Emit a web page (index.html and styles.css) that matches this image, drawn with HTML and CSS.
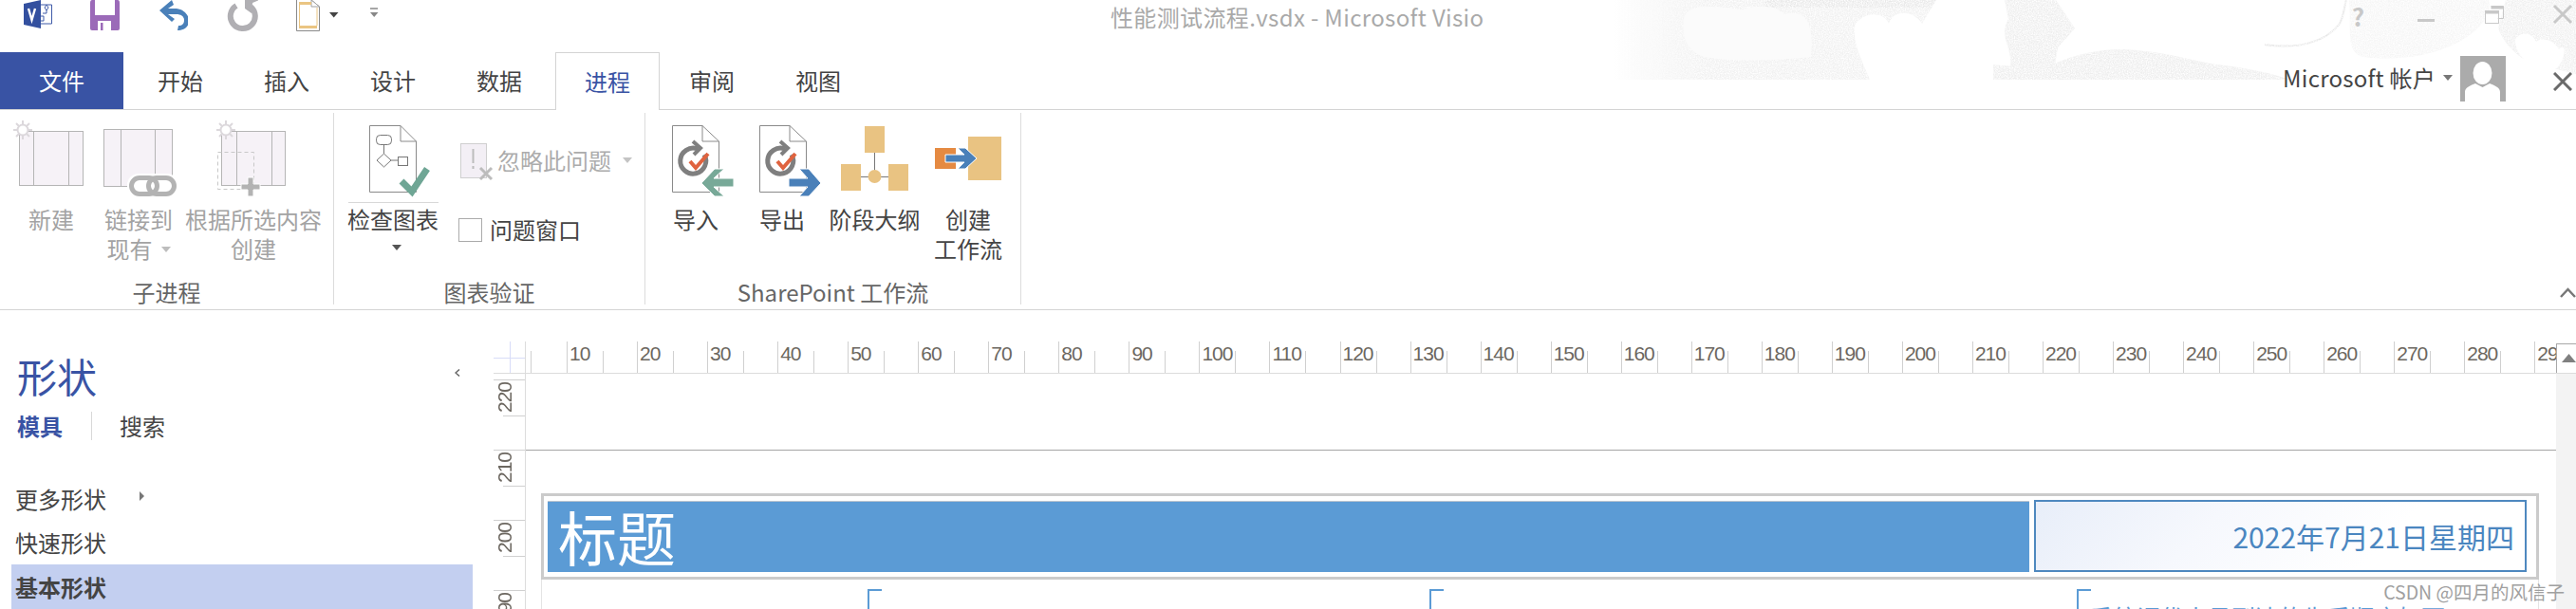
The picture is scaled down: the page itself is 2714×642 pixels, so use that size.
FILE: index.html
```html
<!DOCTYPE html>
<html lang="zh">
<head>
<meta charset="utf-8">
<title>性能测试流程.vsdx - Microsoft Visio</title>
<link rel="stylesheet" href="styles.css">
</head>
<body>
<div class="window">
  <svg class="backdrop" viewBox="1614 0 1100 84" width="1100" height="84" aria-hidden="true">
    <defs>
      <linearGradient id="fade" x1="0" x2="1" y1="0" y2="0">
        <stop offset="0" stop-color="#f1f1f1" stop-opacity="0"/>
        <stop offset="0.22" stop-color="#f1f1f1"/>
        <stop offset="1" stop-color="#f1f1f1"/>
      </linearGradient>
      <filter id="speck" x="0" y="0" width="100%" height="100%">
        <feTurbulence type="fractalNoise" baseFrequency="0.8" numOctaves="2" seed="4" result="n"/>
        <feColorMatrix in="n" type="matrix" values="0 0 0 0 1  0 0 0 0 1  0 0 0 0 1  0 0 0 2 -0.6" result="w"/>
        <feComposite in="w" in2="SourceAlpha" operator="in" result="m"/>
        <feMerge><feMergeNode in="SourceGraphic"/><feMergeNode in="m"/></feMerge>
      </filter>
    </defs>
    <g filter="url(#speck)">
      <rect x="1700" y="0" width="430" height="84" fill="url(#fade)"/>
      <rect x="1860" y="0" width="180" height="8" fill="#e9e9e9"/>
    </g>
    <path d="M1774 20C1776 5 1800 5 1835 10C1850 5 1870 5 1880 15C1900 10 1912 20 1908 60C1870 64 1810 66 1790 58C1775 50 1772 35 1774 20Z" fill="#fbfbfb"/>
    <path d="M2040 0H2135V84H1970C1960 60 1950 40 1955 25C1965 12 1985 12 1990 25C1995 10 2015 10 2025 25Z" fill="#fff"/>
    <g filter="url(#speck)">
      <path d="M2112 0H2166L2186 30L2168 50L2165 68L2130 84L2118 75C2122 50 2105 40 2116 20Z" fill="#eeeeee"/>
      <path d="M2100 84V68C2130 72 2150 70 2170 65C2190 56 2215 52 2237 52C2280 54 2310 64 2335 68C2370 72 2395 78 2413 84Z" fill="#eeeeee"/>
      <path d="M2386 47C2420 52 2450 45 2465 25C2470 15 2470 5 2472 0" fill="none" stroke="#e6e6e6" stroke-width="2"/>
      <path d="M2475 0H2622C2630 30 2570 70 2490 60C2470 55 2478 30 2475 0Z" fill="#f6f6f6"/>
      <path d="M2640 0H2714V78L2690 72C2660 70 2640 50 2632 30Z" fill="#f0f0f0"/>
    </g>
    <path d="M2650 42C2655 32 2668 34 2672 44C2680 38 2692 44 2696 52C2706 42 2702 70 2690 74C2670 76 2650 60 2650 42Z" fill="#fff"/>
  </svg>

  <header class="titlebar">
    <div class="qat">
      <svg class="qat-icon w30" viewBox="25 0 30 34" aria-hidden="true">
        <path d="M25 4L43 0V30L25 26Z" fill="#33509f"/>
        <path d="M30 9L33.500 21L37 9" fill="none" stroke="#fff" stroke-width="2.400"/>
        <path d="M43 5H54.500V25H43" fill="none" stroke="#3f5ba8" stroke-width="1"/>
        <path d="M49 5L51 8L49 11L47 8Z" fill="#fff" stroke="#3f5ba8"/>
        <path d="M49 11V14H45M43 17H46V22H43" fill="none" stroke="#3f5ba8"/>
      </svg>
      <svg class="qat-icon w32" viewBox="95 0 32 34" aria-hidden="true">
        <path d="M97 0H124Q126 0 126 3V30Q126 32 124 32H97Q95 32 95 30V3Q95 0 97 0Z" fill="#9b6ab8"/>
        <rect x="100" y="0" width="21" height="16" fill="#fff"/>
        <rect x="103" y="22" width="14" height="10" fill="#fff"/>
        <rect x="106" y="24" width="2.500" height="8" fill="#9b6ab8"/>
      </svg>
      <svg class="qat-icon w31" viewBox="167 0 31 34" aria-hidden="true">
        <path d="M168 11L181 0L183 5L177 9H186C194 10 199 16 199 22C199 29 193 32 187 32L188 27C192 27 194 25 194 21C194 17 190 15 186 15H177L184 20L181 23Z" fill="#4a80b9"/>
      </svg>
      <svg class="qat-icon w34" viewBox="238 0 34 34" aria-hidden="true">
        <path d="M249 6A13 13 0 1 0 264 7" fill="none" stroke="#b0afb3" stroke-width="6"/>
        <path d="M258 0H273L266 3L265 14L258 9Z" fill="#b0afb3"/>
      </svg>
      <svg class="qat-icon w88" viewBox="312 0 88 34" aria-hidden="true">
        <path d="M312.500 0V32.500H336.500V7L328 0" fill="#fff" stroke="#8a8a8a"/>
        <path d="M328 0V7H336.500Z" fill="#fff" stroke="#a0a0a0"/>
        <path d="M315 2H328V5H316V27H334V30H315Z" fill="#eac582"/>
        <path d="M334 8V27" stroke="#eac582"/>
        <path d="M347 13H356.500L351.700 18.500Z" fill="#444"/>
        <path d="M390 9H398" stroke="#888" stroke-width="1.500"/>
        <path d="M390 13H398.500L394.200 18Z" fill="#888"/>
      </svg>
    </div>
    <div class="doc-title">性能测试流程.vsdx - Microsoft Visio</div>
    <div class="win-controls">
      <span class="help">?</span>
      <svg class="win-svg" viewBox="2540 0 174 34" aria-hidden="true">
        <rect x="2547" y="20" width="18" height="3" fill="#c8c8c8"/>
        <path d="M2624.500 6.500H2637.500V19.500H2631" fill="none" stroke="#c8c8c8"/>
        <rect x="2624.500" y="6.500" width="13" height="3" fill="#c8c8c8"/>
        <rect x="2618.500" y="11.500" width="14" height="13" fill="#fff" fill-opacity="0.7" stroke="#c8c8c8"/>
        <rect x="2618.500" y="11.500" width="14" height="3" fill="#c8c8c8"/>
        <path d="M2691 6L2709 24M2709 6L2691 24" stroke="#c8c8c8" stroke-width="3"/>
      </svg>
    </div>
  </header>

  <nav class="tabrow">
    <div class="tab-file">文件</div>
    <div class="tabs">
      <div class="tab">开始</div>
      <div class="tab">插入</div>
      <div class="tab">设计</div>
      <div class="tab">数据</div>
      <div class="tab tab-active">进程</div>
      <div class="tab">审阅</div>
      <div class="tab">视图</div>
    </div>
    <div class="account">
      <span class="account-name">Microsoft 帐户</span>
      <svg class="account-arrow" viewBox="0 0 10 6" aria-hidden="true"><path d="M0 0H10L5 6Z" fill="#777"/></svg>
      <svg class="avatar" viewBox="2592 59 48 48" aria-hidden="true">
        <rect x="2592" y="59" width="48" height="48" fill="#ababab"/>
        <ellipse cx="2615.500" cy="77" rx="10" ry="12" fill="#fff"/>
        <path d="M2597 107V97C2597 92 2603 90 2608 88L2615.500 92L2623 88C2628 90 2634 92 2634 97V107Z" fill="#fff"/>
      </svg>
      <svg class="account-close" viewBox="0 0 20 20" aria-hidden="true"><path d="M1 1L19 19M19 1L1 19" stroke="#6a6a6a" stroke-width="3"/></svg>
    </div>
  </nav>

  <section class="ribbon">
    <div class="group group-sub">
      <div class="group-body">
        <div class="rbtn rbtn-off w88">
          <svg class="rbtn-icon" viewBox="10 119 88 96" aria-hidden="true">
            <rect x="20.500" y="138.500" width="67" height="57" fill="#f6f2f7" stroke="#b5b5b5"/>
            <path d="M35.500 138.500V195.500M72.500 138.500V195.500" stroke="#b5b5b5"/>
            <g stroke="#dcd8dc" stroke-width="2"><path d="M24 127V147M14 137H34M17 130L31 144M31 130L17 144"/></g>
            <circle cx="24" cy="137" r="5.500" fill="#fff" stroke="#dcd8dc" stroke-width="2"/>
          </svg>
          <div class="rbtn-label">新建</div>
        </div>
        <div class="rbtn rbtn-off w96">
          <svg class="rbtn-icon" viewBox="98 119 96 96" aria-hidden="true">
            <rect x="109.500" y="136.500" width="72" height="60" fill="#f6f2f7" stroke="#b5b5b5"/>
            <path d="M127.500 136.500V196.500M163.500 136.500V196.500" stroke="#b5b5b5"/>
            <rect x="134" y="183" width="54" height="26" rx="12" fill="#fff"/>
            <rect x="138.500" y="187.500" width="27" height="17" rx="8.500" fill="none" stroke="#b3b3b3" stroke-width="5"/>
            <rect x="156.500" y="187.500" width="27" height="17" rx="8.500" fill="none" stroke="#b3b3b3" stroke-width="5"/>
          </svg>
          <div class="rbtn-label">链接到</div>
          <div class="rbtn-label rbtn-more">现有<svg class="drop" viewBox="0 0 10 6" aria-hidden="true"><path d="M0 0H10L5 6Z" fill="#bdbdbd"/></svg></div>
        </div>
        <div class="rbtn rbtn-off w146">
          <svg class="rbtn-icon" viewBox="194 119 146 96" aria-hidden="true">
            <rect x="233.500" y="138.500" width="67" height="57" fill="#f6f2f7" stroke="#b5b5b5"/>
            <path d="M249.500 138.500V195.500M286.500 138.500V195.500" stroke="#b5b5b5"/>
            <g stroke="#dcd8dc" stroke-width="2"><path d="M238 127V147M228 137H248M231 130L245 144M245 130L231 144"/></g>
            <circle cx="238" cy="137" r="5.500" fill="#fff" stroke="#dcd8dc" stroke-width="2"/>
            <rect x="229.500" y="160.500" width="38" height="39" fill="none" stroke="#c8c8c8" stroke-dasharray="4 3"/>
            <path d="M261 187H267V194H274V200H267V207H261V200H254V194H261Z" fill="#b3b3b3" stroke="#fff"/>
          </svg>
          <div class="rbtn-label">根据所选内容</div>
          <div class="rbtn-label">创建</div>
        </div>
      </div>
      <div class="group-label">子进程</div>
    </div>

    <div class="group group-check">
      <div class="group-body">
        <div class="rbtn w96">
          <svg class="rbtn-icon" viewBox="366 119 96 96" aria-hidden="true">
            <path d="M389.500 132.500H422L438.500 149V202.500H389.500Z" fill="#fff" stroke="#8a8a8a"/>
            <path d="M422 132.500V149H438.500" fill="none" stroke="#8a8a8a"/>
            <rect x="396.500" y="142.500" width="16" height="10" rx="4" fill="#fff" stroke="#777"/>
            <path d="M404.500 152.500V162M412 169H419" stroke="#777"/>
            <path d="M404.500 162L412 169L404.500 176L397 169Z" fill="#fff" stroke="#777"/>
            <rect x="419.500" y="165.500" width="10" height="9" fill="#fff" stroke="#777"/>
            <path d="M423 191L434 202L450 178" fill="none" stroke="#6fa695" stroke-width="7"/>
            <path d="M367 213.500H462" stroke="#d8d8d8"/>
          </svg>
          <div class="rbtn-label">检查图表</div>
          <div class="rbtn-label rbtn-solo"><svg class="drop-dark" viewBox="0 0 10 6" aria-hidden="true"><path d="M0 0H10L5 6Z" fill="#555"/></svg></div>
        </div>
        <div class="check-side">
          <div class="side-row side-off">
            <svg class="side-icon" viewBox="485 145 35 48" aria-hidden="true">
              <rect x="485.500" y="151.500" width="27" height="36" fill="#f3eff5" stroke="#cfcfcf"/>
              <path d="M498.500 157V172" stroke="#bcbcbc" stroke-width="2"/>
              <rect x="497.500" y="175" width="2" height="3" fill="#bcbcbc"/>
              <path d="M506 177L518 189M518 177L506 189" stroke="#bcbcbc" stroke-width="3"/>
            </svg>
            <span class="side-text">忽略此问题</span>
            <svg class="side-drop" viewBox="0 0 10 6" aria-hidden="true"><path d="M0 0H10L5 6Z" fill="#c4c4c4"/></svg>
          </div>
          <div class="side-row">
            <span class="checkbox"></span>
            <span class="side-text">问题窗口</span>
          </div>
        </div>
      </div>
      <div class="group-label">图表验证</div>
    </div>

    <div class="group group-sp">
      <div class="group-body">
        <div class="rbtn w90">
          <svg class="rbtn-icon" viewBox="688 119 90 96" aria-hidden="true">
            <path d="M708.500 132.500H740L757.500 149V202.500H708.500Z" fill="#fff" stroke="#8a8a8a"/>
            <path d="M740 132.500V149H757.500" fill="none" stroke="#8a8a8a"/>
            <path d="M735 157A13.500 13.500 0 1 0 742 163" fill="none" stroke="#7f7f7f" stroke-width="5"/>
            <path d="M730 149L738 156L731 163" fill="none" stroke="#7f7f7f" stroke-width="4"/>
            <path d="M727 170L733 177L746 162" fill="none" stroke="#e0633f" stroke-width="4"/>
            <path d="M739 193L753 178H763L752 188H773V197H752L763 207H753Z" fill="#78a998" stroke="#fff"/>
          </svg>
          <div class="rbtn-label">导入</div>
        </div>
        <div class="rbtn w92">
          <svg class="rbtn-icon" viewBox="778 119 92 96" aria-hidden="true">
            <path d="M800.500 132.500H832L849.500 149V202.500H800.500Z" fill="#fff" stroke="#8a8a8a"/>
            <path d="M832 132.500V149H849.500" fill="none" stroke="#8a8a8a"/>
            <path d="M827 157A13.500 13.500 0 1 0 834 163" fill="none" stroke="#7f7f7f" stroke-width="5"/>
            <path d="M822 149L830 156L823 163" fill="none" stroke="#7f7f7f" stroke-width="4"/>
            <path d="M819 170L825 177L838 162" fill="none" stroke="#e0633f" stroke-width="4"/>
            <path d="M865 193L852 178H842L851 188H831V197H851L842 207H852Z" fill="#4a80b9" stroke="#fff"/>
          </svg>
          <div class="rbtn-label">导出</div>
        </div>
        <div class="rbtn w103">
          <svg class="rbtn-icon" viewBox="870 119 103 96" aria-hidden="true">
            <path d="M921.500 161V186M907 186.500H936" stroke="#777"/>
            <rect x="911" y="133" width="21" height="28" fill="#e9c382"/>
            <rect x="886" y="173" width="21" height="28" fill="#e9c382"/>
            <rect x="936" y="173" width="21" height="28" fill="#e9c382"/>
            <ellipse cx="921.500" cy="186" rx="7" ry="7" fill="#e9c382"/>
          </svg>
          <div class="rbtn-label">阶段大纲</div>
        </div>
        <div class="rbtn w94">
          <svg class="rbtn-icon" viewBox="973 119 94 96" aria-hidden="true">
            <rect x="1020" y="144" width="35" height="46" fill="#e9c382"/>
            <rect x="985" y="156" width="22" height="22" fill="#e58a42"/>
            <path d="M1029 167L1017 156H1009L1016 163H996V171H1016L1009 178H1017Z" fill="#4a80b9" stroke="#fff"/>
          </svg>
          <div class="rbtn-label">创建</div>
          <div class="rbtn-label">工作流</div>
        </div>
      </div>
      <div class="group-label">SharePoint 工作流</div>
    </div>

    <svg class="ribbon-collapse" viewBox="0 0 17 11" aria-hidden="true"><path d="M1 10L8.500 2L16 10" fill="none" stroke="#777" stroke-width="2.500"/></svg>
  </section>

  <main class="workspace">
    <aside class="shapes">
      <div class="shapes-head">
        <h1 class="shapes-title">形状</h1>
        <svg class="shapes-collapse" viewBox="0 0 6 8" aria-hidden="true"><path d="M5 0.500L1 4L5 7.500" fill="none" stroke="#666" stroke-width="1.500"/></svg>
      </div>
      <div class="shapes-tabs">
        <span class="shapes-tab-on">模具</span>
        <span class="shapes-sep"></span>
        <span class="shapes-tab">搜索</span>
      </div>
      <ul class="stencils">
        <li class="stencil">更多形状<svg class="stencil-arrow" viewBox="0 0 5 10" aria-hidden="true"><path d="M0 0L5 5L0 10Z" fill="#777"/></svg></li>
        <li class="stencil">快速形状</li>
        <li class="stencil stencil-on">基本形状</li>
      </ul>
    </aside>

    <div class="canvas">
      <div class="ruler-top">
        <div class="corner"></div>
        <div class="ruler-h">
          <div class="rh-lead"></div>
          <div class="rh">10</div><div class="rh">20</div><div class="rh">30</div><div class="rh">40</div><div class="rh">50</div>
          <div class="rh">60</div><div class="rh">70</div><div class="rh">80</div><div class="rh">90</div><div class="rh">100</div>
          <div class="rh">110</div><div class="rh">120</div><div class="rh">130</div><div class="rh">140</div><div class="rh">150</div>
          <div class="rh">160</div><div class="rh">170</div><div class="rh">180</div><div class="rh">190</div><div class="rh">200</div>
          <div class="rh">210</div><div class="rh">220</div><div class="rh">230</div><div class="rh">240</div><div class="rh">250</div>
          <div class="rh">260</div><div class="rh">270</div><div class="rh">280</div><div class="rh">290</div>
        </div>
        <div class="scroll-up"><svg class="scroll-tri" viewBox="0 0 15 9" aria-hidden="true"><path d="M0 9L7.500 0L15 9Z" fill="#808080"/></svg></div>
      </div>
      <div class="canvas-body">
        <div class="ruler-v">
          <div class="rv"><span class="rv-text">220</span></div>
          <div class="rv"><span class="rv-text">210</span></div>
          <div class="rv"><span class="rv-text">200</span></div>
          <div class="rv"><span class="rv-text">190</span></div>
        </div>
        <div class="drawing">
          <div class="page">
            <div class="frame">
              <div class="title-bar">标题</div>
              <div class="date-box">2022年7月21日星期四</div>
            </div>
            <div class="lanes">
              <div class="lane lane-a"><span class="lane-text">性能测试流程</span></div>
              <div class="lane lane-b"></div>
              <div class="lane lane-c"><span class="lane-text">系统调优人员到达的先后顺序如下</span></div>
            </div>
          </div>
        </div>
        <div class="scrollbar"></div>
      </div>
    </div>
  </main>

  <div class="watermark">CSDN @四月的风信子</div>
</div>
</body>
</html>
```

FILE: styles.css
```css
* { box-sizing: border-box; }

html, body { margin: 0; padding: 0; background: #fff; }

body {
  font-family: "Noto Sans CJK SC", "Noto Sans", sans-serif;
  font-size: 24px;
  color: #444;
}

.window {
  position: relative;
  width: 2714px;
  height: 642px;
  overflow: hidden;
  display: flex;
  flex-direction: column;
}

.backdrop {
  position: absolute;
  top: 0;
  right: 0;
  display: block;
}

/* title bar */
.titlebar {
  position: relative;
  height: 55px;
  display: flex;
  align-items: flex-start;
  padding-left: 25px;
  flex: none;
}

.qat { display: flex; gap: 40px; }
.qat-icon { display: block; height: 34px; }
.w30 { width: 30px; }
.w31 { width: 31px; }
.w32 { width: 32px; }
.w34 { width: 34px; }
.w88 { width: 88px; }
.w90 { width: 90px; }
.w92 { width: 92px; }
.w94 { width: 94px; }
.w96 { width: 96px; }
.w103 { width: 103px; }
.w146 { width: 146px; }

.doc-title {
  margin-left: 770px;
  line-height: 36px;
  letter-spacing: 0.36px;
  color: #a9a9a9;
  white-space: nowrap;
}

.win-controls {
  margin-left: auto;
  display: flex;
  align-items: flex-start;
}

.help {
  font-size: 26px;
  font-weight: 700;
  line-height: 34px;
  color: #c8c8c8;
  margin-right: 49px;
}

.win-svg { display: block; width: 174px; height: 34px; }

/* tabs */
.tabrow {
  position: relative;
  height: 61px;
  flex: none;
  display: flex;
  border-bottom: 1px solid #d4d4d4;
}

.tab-file {
  width: 130px;
  height: 60px;
  background: #3953a4;
  color: #fff;
  text-align: center;
  line-height: 60px;
}

.tabs {
  display: flex;
  gap: 4px;
  margin-left: 6px;
}

.tab {
  width: 108px;
  height: 60px;
  text-align: center;
  line-height: 60px;
}

.tab-active {
  width: 110px;
  height: 61px;
  margin-left: 1px;
  margin-right: -3px;
  background: #fff;
  color: #3953a4;
  border: 1px solid #d4d4d4;
  border-bottom: 0;
}

.account {
  margin-left: auto;
  display: flex;
  align-items: flex-start;
  padding-top: 3px;
  padding-right: 4px;
}

.account-name { line-height: 48px; letter-spacing: 0.25px; white-space: nowrap; }
.account-arrow { width: 10px; height: 6px; margin: 21px 8px 0 8px; display: block; }
.avatar { width: 48px; height: 48px; margin-top: 1px; display: block; }
.account-close { width: 20px; height: 20px; margin: 18px 0 0 50px; display: block; }

/* ribbon */
.ribbon {
  position: relative;
  height: 211px;
  flex: none;
  display: flex;
  align-items: flex-start;
  padding-top: 3px;
  border-bottom: 1px solid #d4d4d4;
}

.group {
  height: 202px;
  display: flex;
  flex-direction: column;
  border-right: 1px solid #dcdcdc;
}

.group-sub { width: 352px; }
.group-check { width: 328px; }
.group-sp { width: 396px; }

.group-body { flex: 1; display: flex; }
.group-sub .group-body { padding-left: 10px; }
.group-check .group-body { padding-left: 14px; }
.group-sp .group-body { padding-left: 8px; }

.group-label {
  line-height: 26px;
  text-align: center;
  color: #666;
  white-space: nowrap;
}

.rbtn { flex: none; text-align: center; }
.rbtn-icon { display: block; width: 100%; height: 96px; }
.rbtn-label { line-height: 31px; white-space: nowrap; }
.rbtn-off .rbtn-label { color: #a3a3a3; }
.rbtn-solo { height: 31px; }

.drop { width: 10px; height: 6px; margin-left: 9px; vertical-align: 6px; }
.drop-dark { width: 10px; height: 6px; margin-left: 8px; vertical-align: 8px; }

.check-side {
  display: flex;
  flex-direction: column;
  gap: 25px;
  padding-top: 26px;
  margin-left: 21px;
}

.side-row {
  height: 48px;
  display: flex;
  align-items: center;
  white-space: nowrap;
}

.side-text { margin-top: -2px; }
.side-off { color: #acacac; padding-left: 2px; }
.side-icon { display: block; width: 35px; height: 48px; margin-right: 4px; }
.side-drop { display: block; width: 10px; height: 6px; margin-left: 12px; }

.checkbox {
  width: 25px;
  height: 25px;
  margin-right: 8px;
  background: #fff;
  border: 1px solid #ababab;
}

.ribbon-collapse {
  position: absolute;
  right: 0;
  bottom: 12px;
  width: 17px;
  height: 11px;
}

/* workspace */
.workspace {
  flex: 1;
  min-height: 0;
  display: flex;
}

.shapes {
  width: 520px;
  flex: none;
  padding-top: 44px;
}

.shapes-head {
  display: flex;
  align-items: center;
  justify-content: space-between;
  padding: 0 35px 0 18px;
}

.shapes-title {
  margin: 0;
  font-size: 42px;
  line-height: 50px;
  font-weight: 400;
  color: #3953a4;
}

.shapes-collapse { width: 6px; height: 8px; display: block; margin-top: -6px; }

.shapes-tabs {
  display: flex;
  align-items: center;
  height: 30px;
  margin-top: 13px;
  padding-left: 18px;
  line-height: 30px;
}

.shapes-tab-on { font-weight: 700; color: #3953a4; }
.shapes-sep { width: 1px; height: 30px; margin: 0 29px 0 30px; background: #d8d8d8; }

.stencils { list-style: none; margin: 39px 0 0 12px; padding: 0; width: 486px; }

.stencil {
  height: 46px;
  line-height: 46px;
  padding-left: 4px;
  display: flex;
  align-items: center;
}

.stencil-arrow { width: 5px; height: 10px; margin: -6px 0 0 35px; display: block; }
.stencil-on { height: 47px; background: #c3cff0; font-weight: 700; }

/* canvas */
.canvas {
  flex: 1;
  min-width: 0;
  display: flex;
  flex-direction: column;
  padding-top: 33px;
}

.ruler-top {
  height: 34px;
  flex: none;
  display: flex;
  border-bottom: 1px solid #dcdcdc;
}

.corner {
  width: 34px;
  flex: none;
  background:
    linear-gradient(#d8dcf8, #d8dcf8) 17px 0 / 1px 100% no-repeat,
    linear-gradient(#d8dcf8, #d8dcf8) 0 17px / 100% 1px no-repeat;
  border-right: 1px solid #dcdcdc;
}

.ruler-h {
  flex: 1;
  min-width: 0;
  display: flex;
  overflow: hidden;
  font-family: "Liberation Sans", sans-serif;
  font-size: 21px;
  color: #6c6760;
}

.rh-lead {
  position: relative;
  flex: none;
  width: 43px;
}

.rh-lead::after {
  content: "";
  position: absolute;
  left: 5px;
  top: 10px;
  bottom: 0;
  width: 1px;
  background: #d0d0d0;
}

.rh {
  position: relative;
  flex: none;
  width: 74.06px;
  padding-left: 2px;
  line-height: 26px;
  letter-spacing: -1px;
  border-left: 1px solid #d0d0d0;
}

.rh::after {
  content: "";
  position: absolute;
  left: 37px;
  top: 10px;
  bottom: 0;
  width: 1px;
  background: #d0d0d0;
}

.scroll-up {
  width: 21px;
  flex: none;
  margin-top: 2px;
  background: #fff;
  border: 1px solid #a8a8a8;
  border-right: 0;
  border-bottom: 0;
  position: relative;
}

.scroll-tri {
  position: absolute;
  left: 5px;
  top: 10px;
  width: 15px;
  height: 9px;
}

.canvas-body {
  flex: 1;
  min-height: 0;
  display: flex;
}

.ruler-v {
  width: 34px;
  flex: none;
  padding-top: 6px;
  overflow: hidden;
  border-right: 1px solid #dcdcdc;
  font-family: "Liberation Sans", sans-serif;
  font-size: 21px;
  color: #6c6760;
}

.rv {
  position: relative;
  height: 74px;
  border-top: 1px solid #d0d0d0;
  padding-left: 2px;
}

.rv::after {
  content: "";
  position: absolute;
  left: 10px;
  right: 0;
  top: 37px;
  height: 1px;
  background: #d0d0d0;
}

.rv-text {
  display: block;
  height: 36px;
  padding-bottom: 2px;
  line-height: 20px;
  text-align: right;
  writing-mode: vertical-rl;
  transform: rotate(180deg);
  letter-spacing: -1px;
  width: 24px;
}

.drawing {
  flex: 1;
  min-width: 0;
  padding-top: 80px;
}

.page {
  height: 200px;
  border-top: 1px solid #a6a6a6;
  padding: 45px 18px 0 16px;
}

.frame {
  height: 91px;
  display: flex;
  gap: 5px;
  padding: 4px 10px 5px 4px;
  border: 3px solid #cbcbcb;
}

.title-bar {
  width: 1561px;
  flex: none;
  margin-top: 1px;
  padding-left: 11px;
  background: #5b9bd5;
  color: #fff;
  font-size: 62px;
  line-height: 72px;
  border-top: 1px solid #b9c4cf;
}

.date-box {
  flex: 1;
  display: flex;
  align-items: center;
  justify-content: flex-end;
  padding-right: 11px;
  font-size: 30px;
  color: #4a86c0;
  border: 2px solid #4e88bf;
  background: linear-gradient(135deg, #e8eef9 0%, #f6f8fd 35%, #fff 70%);
  white-space: nowrap;
}

.lanes {
  height: 31px;
  display: flex;
  padding-top: 10px;
  padding-left: 343px;
  border-left: 1px solid #e4e4e4;
  border-right: 1px solid #e4e4e4;
  overflow: hidden;
}

.lane {
  position: relative;
  flex: none;
  border-left: 2px solid #5b9bd5;
  overflow: hidden;
  white-space: nowrap;
  font-size: 25px;
  line-height: 30px;
  color: #5b9bd5;
}

.lane::before {
  content: "";
  position: absolute;
  left: 0;
  top: 0;
  width: 13px;
  height: 2px;
  background: #5b9bd5;
}

.lane-a { width: 592px; padding: 17px 0 0 39px; }
.lane-b { width: 682px; }
.lane-c { flex: 1; padding: 14px 0 0 11px; }

.scrollbar {
  width: 21px;
  flex: none;
  background: #f3f3f3;
}

.watermark {
  position: absolute;
  right: 12px;
  bottom: 4px;
  font-size: 19.5px;
  line-height: 28px;
  color: #a0a0a0;
  white-space: nowrap;
}
```
